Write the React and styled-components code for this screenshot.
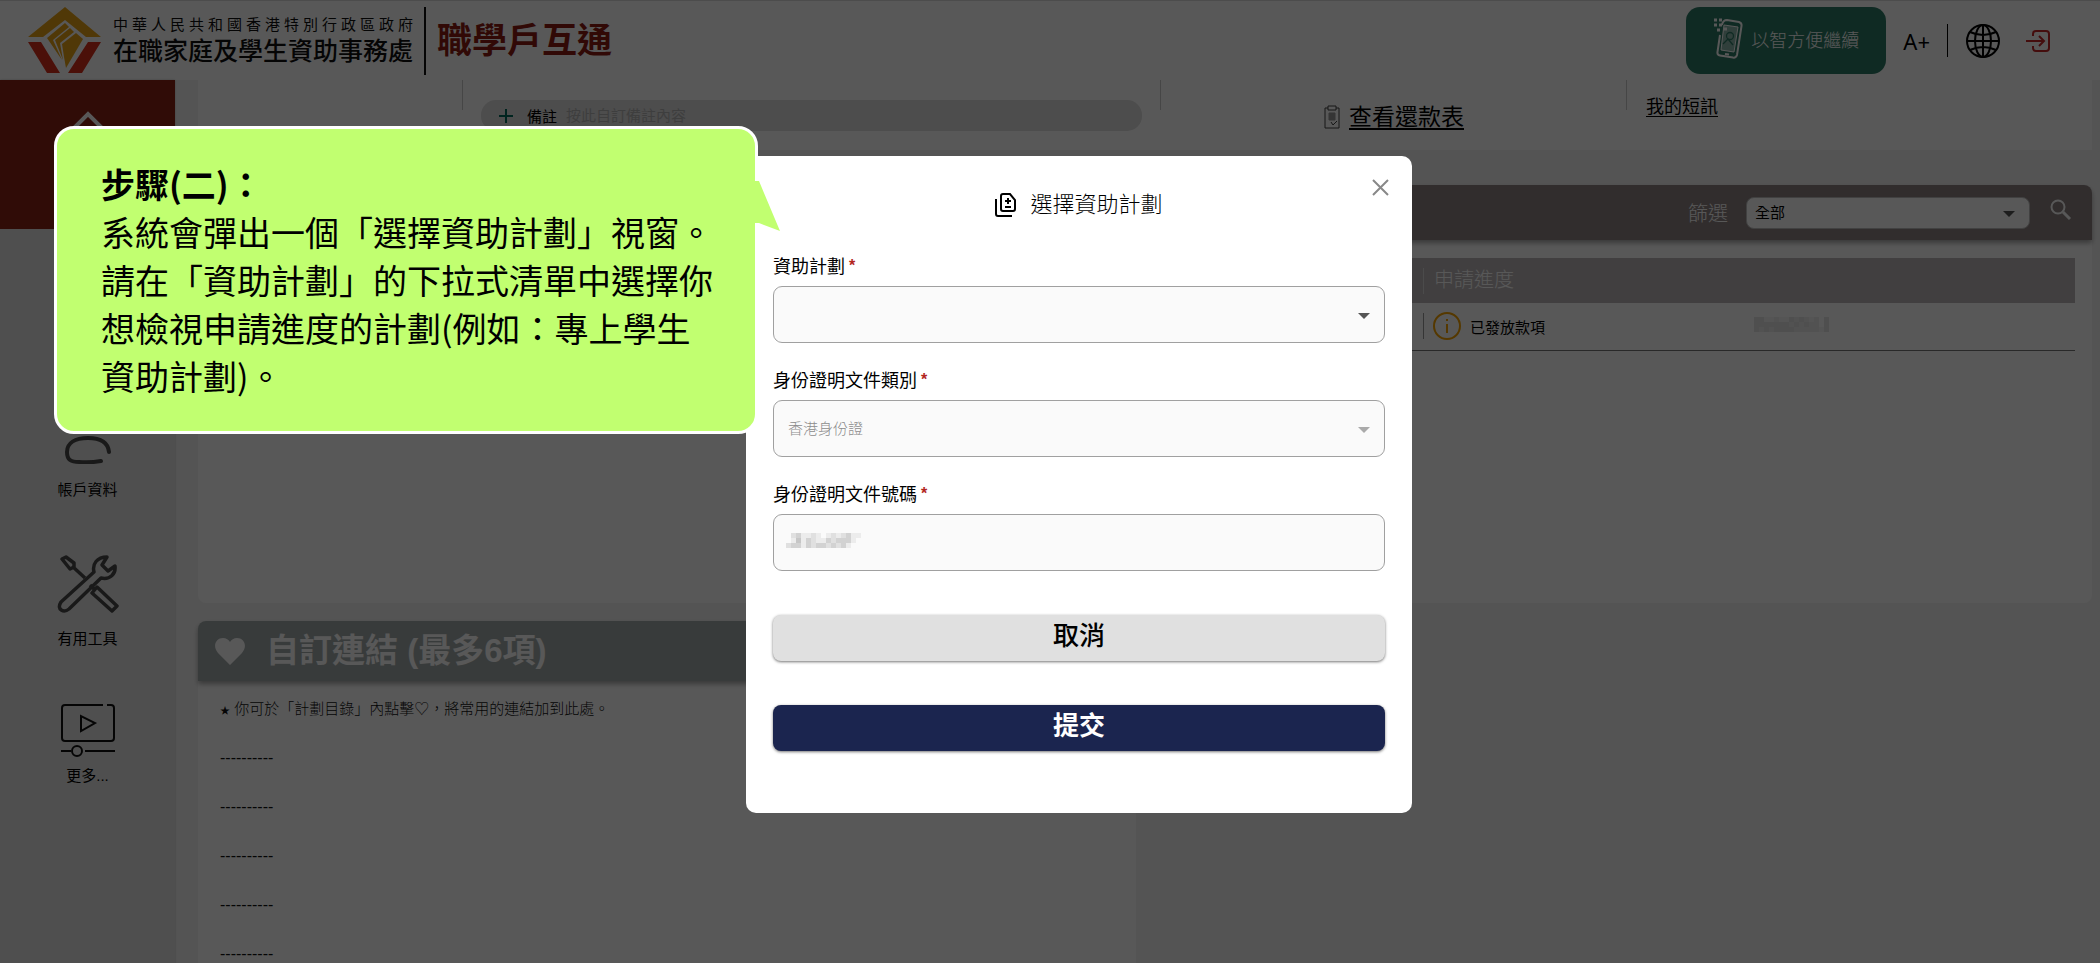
import React from "react";
import styled, { createGlobalStyle } from "styled-components";

const Global = createGlobalStyle`
  *, *::before, *::after { box-sizing: border-box; }
  body {
    margin: 0;
    background: #f4f4f4;
    color: #000;
    font-family: "Liberation Sans", "Noto Sans CJK TC", sans-serif;
    font-size: 16px;
    font-weight: 400;
  }
  button, input, select { font: inherit; color: inherit; }
  a { color: inherit; }
  h1, h2, p, ul { margin: 0; padding: 0; font-weight: inherit; }
  ul { list-style: none; }
`;

const Page = styled.div`
  height: 100vh;
  overflow: hidden;
`;

const Header = styled.header`
  display: flex;
  align-items: center;
  height: 80px;
  padding: 0 50px 0 28px;
  background: #fff;
  border-top: 1px solid #dcdcdc;
`;

const Department = styled.div`
  margin-left: 12px;
  color: #111;
`;

const Government = styled.p`
  font-size: 15px;
  line-height: 20px;
  text-align-last: justify;
`;

const Agency = styled.p`
  font-size: 25px;
  line-height: 32px;
  font-weight: 500;
`;

const SiteName = styled.h1`
  margin-left: 11px;
  padding-left: 11px;
  border-left: 2px solid #111;
  color: #8d1c12;
  font-size: 35px;
  line-height: 68px;
  font-weight: 700;
`;

const HeaderTools = styled.div`
  display: flex;
  align-items: center;
  margin-left: auto;
`;

const SmartButton = styled.button`
  display: flex;
  align-items: center;
  justify-content: center;
  gap: 8px;
  width: 200px;
  height: 67px;
  margin-right: 17px;
  padding: 0 8px 3px;
  border: 0;
  border-radius: 14px;
  background: #2e7b66;
  color: #fff;
  font-size: 18px;
  font-weight: 300;
`;

const PlainButton = styled.button`
  display: flex;
  align-items: center;
  padding: 0;
  border: 0;
  background: none;
  font-family: "Noto Sans", sans-serif;
  font-size: 22px;
`;

const ToolRule = styled.span`
  width: 1px;
  height: 33px;
  margin: 0 18px 0 17px;
  background: #000;
`;

const LogoutLink = styled.a`
  display: flex;
  margin-left: 26px;
`;

const Body = styled.div`
  display: flex;
  align-items: stretch;
  min-height: calc(100vh - 80px);
`;

const Sidebar = styled.nav`
  flex: none;
  width: 175px;
  background: #e6e6e6;
  box-shadow: 0 0 2px #bbb;
`;

const HomeLink = styled.a`
  display: flex;
  justify-content: center;
  height: 149px;
  padding-top: 30px;
  background: #8b2317;
`;

const SideList = styled.ul`
  display: flex;
  flex-direction: column;
  gap: 53px;
  padding-top: 173px;
`;

const SideLink = styled.a`
  display: flex;
  flex-direction: column;
  align-items: center;
  gap: ${(p) => (p.$tight ? 6 : 14)}px;
  font-size: 15px;
  line-height: 24px;
  text-decoration: none;
`;

const Main = styled.main`
  flex: 1;
  min-width: 0;
  padding: 0 8px 0 23px;
`;

const InfoBar = styled.section`
  display: grid;
  grid-template-columns: 265px 698px 466px 1fr;
  height: 70px;
  background: #fff;
`;

const InfoCell = styled.div`
  display: flex;
  align-items: flex-start;
  justify-content: ${(p) => (p.$center ? "center" : "flex-start")};
  padding: ${(p) => p.$pad || "0"};
  background: linear-gradient(#ccc, #ccc) right top / 1px 30px no-repeat;
  &:last-child { background: none; }
`;

const NoteBox = styled.label`
  display: flex;
  align-items: center;
  gap: 9px;
  flex: 1;
  height: 31px;
  padding: 0 18px;
  border-radius: 15px;
  background: #dedede;
  font-size: 15px;
  svg { margin-right: 5px; }
`;

const NoteInput = styled.input`
  flex: 1;
  min-width: 0;
  padding: 0;
  border: 0;
  background: none;
  &::placeholder { color: #b4b4b4; opacity: 1; }
`;

const InfoLink = styled.a`
  display: flex;
  align-items: center;
  gap: 9px;
  font-size: ${(p) => (p.$large ? 23 : 18)}px;
  line-height: 30px;
  text-underline-offset: 3px;
`;

const Card = styled.section`
  background: #fff;
  border-radius: 8px;
  margin-top: ${(p) => p.$gap}px;
  min-height: ${(p) => p.$min}px;
  width: ${(p) => p.$width || "100%"};
`;

const CardBar = styled.div`
  display: flex;
  align-items: center;
  height: ${(p) => (p.$links ? 60 : 55)}px;
  padding: ${(p) => (p.$links ? "0 17px" : "0 20px")};
  justify-content: ${(p) => (p.$links ? "flex-start" : "flex-end")};
  border-radius: 8px 8px 0 0;
  background: ${(p) => (p.$links ? "#a2abab" : "#8e8484")};
  box-shadow: 0 3px 5px rgba(0, 0, 0, 0.35);
  color: #fff;
`;

const LinksTitle = styled.h2`
  margin-left: 21px;
  font-size: 33px;
  line-height: 48px;
  font-weight: 700;
`;

const FilterLabel = styled.label`
  display: flex;
  align-items: center;
  gap: 18px;
  font-size: 20px;
  font-weight: 300;
`;

const SelectWrap = styled.span`
  display: flex;
  position: relative;
  width: ${(p) => p.$width || "100%"};
  svg {
    position: absolute;
    right: 15px;
    top: 50%;
    margin-top: -2px;
    pointer-events: none;
  }
`;

const FilterSelect = styled.select`
  width: 100%;
  height: 32px;
  padding: 0 8px;
  appearance: none;
  border: 1px solid #bbb;
  border-radius: 8px;
  background: #fff;
  color: #000;
  font-size: 15px;
  font-weight: 400;
`;

const IconButton = styled.button`
  display: flex;
  margin: 0 0 6px 20px;
  padding: 0;
  border: 0;
  background: none;
`;

const TableWrap = styled.div`
  padding: 18px 17px 0;
`;

const StatusTable = styled.table`
  width: 100%;
  table-layout: fixed;
  border-collapse: collapse;
  text-align: left;
`;

const Col = styled.col`
  width: ${(p) => p.$width};
`;

const Th = styled.th`
  height: 45px;
  padding: 0 0 4px 11px;
  background: ${(p) => (p.$rule ? "linear-gradient(#d8d8d8, #d8d8d8) left center / 1px 26px no-repeat, #bdb8ba" : "#bdb8ba")};
  color: #fff;
  font-size: 20px;
  font-weight: 300;
`;

const Td = styled.td`
  height: 47px;
  padding: 0 0 0 10px;
  border-bottom: 1px solid #777;
  background: ${(p) => (p.$rule ? "linear-gradient(#999, #999) left center / 1px 26px no-repeat" : "none")};
`;

const Status = styled.span`
  display: flex;
  align-items: center;
  gap: 9px;
  font-size: 15px;
`;

const LinksNote = styled.p`
  padding: 18px 22px 0;
  color: #111;
  font-size: 15px;
  line-height: 20px;
  font-weight: 300;
  small { font-size: 10px; }
`;

const EmptyLinks = styled.ul`
  padding: 12px 22px 0;
  font-size: 16px;
  line-height: 49px;
  color: #111;
`;

const Overlay = styled.div`
  position: fixed;
  inset: 0;
  display: flex;
  justify-content: center;
  align-items: flex-start;
  padding: 156px 0 0 58px;
  background: rgba(0, 0, 0, 0.655);
`;

const Dialog = styled.form`
  position: relative;
  display: flex;
  flex-direction: column;
  width: 666px;
  padding: 33px 27px 62px;
  border-radius: 10px;
  background: #fff;
`;

const CloseButton = styled.button`
  position: absolute;
  top: 23px;
  right: 23px;
  display: flex;
  padding: 0;
  border: 0;
  background: none;
`;

const DialogTitle = styled.h2`
  display: flex;
  align-items: center;
  justify-content: center;
  gap: 14px;
  margin-bottom: 36px;
  font-size: 22px;
  line-height: 32px;
  font-weight: 300;
`;

const Field = styled.div`
  margin-bottom: 28px;
`;

const FieldLabel = styled.label`
  display: flex;
  gap: 4px;
  margin-bottom: 9px;
  font-size: 18px;
  line-height: 20px;
  span { color: #b3261e; font-size: 16px; line-height: 18px; font-weight: 700; }
`;

const fieldBox = `
  width: 100%;
  height: 57px;
  padding: 0 14px;
  appearance: none;
  border: 1px solid #a0a0a0;
  border-radius: 9px;
  background: #fafafa;
  color: #8c8c8c;
  opacity: 1;
  font-size: 15px;
  font-weight: 300;
`;
const FieldSelect = styled.select`${fieldBox}`;
const FieldInput = styled.input`${fieldBox}`;

const MaskedField = styled.div`
  display: grid;
  align-items: center;
  > * { grid-area: 1 / 1; }
  svg { margin: 0 0 4px 13px; pointer-events: none; }
`;

const DialogButton = styled.button`
  height: 46px;
  margin-top: ${(p) => (p.$primary ? 44 : 16)}px;
  padding: 0 0 4px;
  border: 0;
  border-radius: 8px;
  background: ${(p) => (p.$primary ? "#1b254f" : "#e0e0e0")};
  color: ${(p) => (p.$primary ? "#fff" : "#000")};
  box-shadow: 0 1px 3px rgba(0, 0, 0, 0.55);
  font-size: 26px;
  line-height: 40px;
  font-weight: ${(p) => (p.$primary ? 700 : 500)};
`;

const Callout = styled.aside`
  position: fixed;
  left: 54px;
  top: 126px;
  width: 704px;
  padding: 31px 40px 31px 44px;
  border: 3px solid #fff;
  border-radius: 20px;
  background: #c1ff70;
  font-family: "Noto Sans CJK TC", sans-serif;
  font-size: 34px;
  line-height: 48px;
  strong { font-weight: 700; }
`;

const Tail = styled.svg`
  position: absolute;
  left: 698px;
  top: 52px;
`;

function Mosaic({ cells, cols, size, tone }) {
  return (
    <svg width={cols * size} height={Math.ceil(cells.length / cols) * size} aria-hidden="true">
      {cells.map((v, i) => (
        <rect key={i} x={(i % cols) * size} y={Math.floor(i / cols) * size} width={size} height={size} fill={tone} fillOpacity={v / 10} />
      ))}
    </svg>
  );
}

const idCells = [0,2,3,1,1,2,1,0,1,2,1,2,3,1,1, 0,1,4,1,3,2,1,1,3,2,3,3,3,1,0, 2,3,3,1,3,2,3,3,2,3,2,3,1,0,0];
const refCells = [3,3,1,1,2,1,1,3,2,3,2,1,2,0,3, 3,3,3,3,3,3,3,2,3,2,3,2,2,0,3, 3,2,3,2,3,3,3,3,2,2,2,2,2,1,3];

const Arrow = ({ color = "#555" }) => (
  <svg width="12" height="6" viewBox="0 0 12 6" aria-hidden="true"><path d="M0 0h12L6 6z" fill={color} /></svg>
);

const Logo = () => (
  <svg width="73" height="67" viewBox="0 0 73 67" aria-hidden="true">
    <path d="M37 0 73 30H58L37 13 15 30H0z" fill="#e8a317" />
    <path d="M0 35h13l19 31H19zM73 35H60L40 66h14z" fill="#d9301c" />
    <path d="M19 31 37 16 41 20 25 33 34 53z" fill="#e8a317" />
    <path d="M27 33 42 21 46 25 32 36 35 53z" fill="#e8a317" />
    <path d="M34 37 48 26 55 32 38 61 36 50z" fill="#e8a317" />
  </svg>
);

const Phone = () => (
  <svg width="30" height="42" viewBox="0 0 30 42" fill="none" stroke="#fff" strokeWidth="2" aria-hidden="true">
    <path d="M9 7q1-5 5-5l12 2q3 1 2.500 4L24 37q-1 3-4 2.600L7 37.500Q4 37 4.500 34L7 17" />
    <path d="M11 7 25 9 21 34 8 32 10 15z" strokeWidth="1" fill="#fff" fillOpacity=".45" />
    <circle cx="17" cy="18" r="3.500" strokeWidth="1.300" stroke="#2e7b66" />
    <path d="m10 26 5-5 5 6" strokeWidth="1.300" stroke="#2e7b66" />
    <path d="M12 36l4 .6" />
    <path d="M1 2h3M6 2h3M1 7h3M6 7h3M4 12h3M11 11h3" strokeWidth="3" />
  </svg>
);

const Globe = () => (
  <svg width="34" height="34" viewBox="0 0 34 34" fill="none" stroke="#000" strokeWidth="2" aria-hidden="true">
    <circle cx="17" cy="17" r="16" />
    <ellipse cx="17" cy="17" rx="8" ry="16" />
    <path d="M17 1v32M1 17h32M4 8q13 6 26 0M4 26q13-6 26 0" />
  </svg>
);

const Exit = () => (
  <svg width="24" height="22" viewBox="0 0 24 22" fill="none" stroke="#c62828" strokeWidth="2" aria-hidden="true">
    <path d="M7 6V4q0-3 3-3h10q3 0 3 3v14q0 3-3 3H10q-3 0-3-3v-2M0 11h17M13 6l5 5-5 5" />
  </svg>
);

const HomeIcon = () => (
  <svg width="60" height="56" viewBox="0 0 60 56" fill="none" stroke="#fff" strokeWidth="4" aria-hidden="true">
    <path d="M3 31 30 4l27 27M12 24v29h36V24" />
  </svg>
);

const Person = () => (
  <svg width="46" height="62" viewBox="0 0 46 62" fill="none" stroke="#4a4a4a" strokeWidth="4" strokeLinecap="round" aria-hidden="true">
    <circle cx="23" cy="14" r="12" />
    <path d="M44 50C43 40 36 36 23 36S2 41 2 50C2 58 6 60 14 60Q25 61 36 59" />
  </svg>
);

const Tools = () => (
  <svg width="62" height="58" viewBox="0 0 62 58" fill="none" stroke="#4a4a4a" strokeWidth="3.500" strokeLinejoin="round" aria-hidden="true">
    <path d="M37 17C35 9 40 2 50 2L45 10 51 16 58 11C59 19 53 25 44 23L12 54C7 58-1 55 4 47z" />
    <path d="M5 4 9 2 17 8 17 12 13 14zM15 11 28 23M33 30 37 34M35 38 40 32 60 51 55 56z" />
  </svg>
);

const Video = () => (
  <svg width="54" height="54" viewBox="0 0 54 54" fill="none" stroke="#111" strokeWidth="2" aria-hidden="true">
    <path d="M42 1H4Q1 1 1 4v30q0 3 3 3h46q3 0 3-3V4q0-3-3-3h-4M20 12v15l14-8zM0 47h10M24 47h30" />
    <circle cx="16" cy="47" r="5" />
  </svg>
);

const Clipboard = () => (
  <svg width="16" height="24" viewBox="0 0 16 24" fill="none" stroke="#444" aria-hidden="true">
    <path d="M4 3H1v20h14V3h-3M4 1h8v4H4zM7 17l2 3 4-4" />
    <path d="M5 8h6v7H5z" fill="#999" stroke="#999" />
  </svg>
);

const Copies = () => (
  <svg width="21" height="24" viewBox="0 0 21 24" fill="none" stroke="#000" strokeWidth="2" aria-hidden="true">
    <path d="M1 6v15q0 2 2 2h14M8 1h7l5 6v9q0 2-2 2H8q-2 0-2-2V3q0-2 2-2zM10 8h6M13 5v6M10 14h6" />
  </svg>
);

export default function App() {
  return (
    <>
      <Global />
      <Page>
        <Header>
          <Logo />
          <Department>
            <Government>中華人民共和國香港特別行政區政府</Government>
            <Agency>在職家庭及學生資助事務處</Agency>
          </Department>
          <SiteName>職學戶互通</SiteName>
          <HeaderTools>
            <SmartButton type="button"><Phone />以智方便繼續</SmartButton>
            <PlainButton type="button">A+</PlainButton>
            <ToolRule />
            <PlainButton type="button" aria-label="語言"><Globe /></PlainButton>
            <LogoutLink href="#logout" aria-label="登出"><Exit /></LogoutLink>
          </HeaderTools>
        </Header>
        <Body>
          <Sidebar>
            <HomeLink href="#home" aria-label="主頁"><HomeIcon /></HomeLink>
            <SideList>
              <li><SideLink href="#account"><Person />帳戶資料</SideLink></li>
              <li><SideLink href="#tools"><Tools />有用工具</SideLink></li>
              <li><SideLink $tight href="#more"><Video />更多...</SideLink></li>
            </SideList>
          </Sidebar>
          <Main>
            <InfoBar>
              <InfoCell />
              <InfoCell $pad="20px 19px 0 18px">
                <NoteBox>
                  <svg width="14" height="14" viewBox="0 0 14 14" aria-hidden="true"><path d="M7 0v14M0 7h14" stroke="#00695c" strokeWidth="2" /></svg>
                  備註
                  <NoteInput placeholder="按此自訂備註內容" />
                </NoteBox>
              </InfoCell>
              <InfoCell $center $pad="22px 0 0">
                <InfoLink $large href="#repay"><Clipboard /><u>查看還款表</u></InfoLink>
              </InfoCell>
              <InfoCell $pad="12px 0 0 19px">
                <InfoLink href="#messages"><u>我的短訊</u></InfoLink>
              </InfoCell>
            </InfoBar>
            <Card $gap={35} $min={418}>
              <CardBar>
                <FilterLabel>
                  篩選
                  <SelectWrap $width="284px">
                    <FilterSelect><option>全部</option></FilterSelect>
                    <Arrow />
                  </SelectWrap>
                </FilterLabel>
                <IconButton type="button" aria-label="搜尋">
                  <svg width="22" height="22" viewBox="0 0 22 22" fill="none" stroke="#fff" strokeWidth="2" aria-hidden="true"><circle cx="8" cy="8" r="6.500" /><path d="m13 13 7 7" strokeWidth="3" /></svg>
                </IconButton>
              </CardBar>
              <TableWrap>
                <StatusTable>
                  <colgroup><col /><Col $width="321px" /><Col $width="331px" /></colgroup>
                  <thead><tr><Th /><Th $rule>申請進度</Th><Th /></tr></thead>
                  <tbody>
                    <tr>
                      <Td />
                      <Td $rule>
                        <Status>
                          <svg width="28" height="28" viewBox="0 0 28 28" fill="none" stroke="#f5a300" strokeWidth="2" aria-hidden="true"><circle cx="14" cy="14" r="13" /><path d="M14 12v9M14 7v2" /></svg>
                          已發放款項
                        </Status>
                      </Td>
                      <Td><Mosaic cells={refCells} cols={15} size={5} tone="#aaa" /></Td>
                    </tr>
                  </tbody>
                </StatusTable>
              </TableWrap>
            </Card>
            <Card $gap={18} $min={400} $width="calc(50% - 9px)">
              <CardBar $links>
                <svg width="30" height="27" viewBox="0 0 30 27" aria-hidden="true"><path d="M15 27 3 15C-3 8 1 0 8 0c3 0 6 2 7 4 1-2 4-4 7-4 7 0 11 8 5 15z" fill="#fff" /></svg>
                <LinksTitle>自訂連結 (最多6項)</LinksTitle>
              </CardBar>
              <LinksNote><small>★</small> 你可於「計劃目錄」內點擊♡，將常用的連結加到此處。</LinksNote>
              <EmptyLinks>
                {[1, 2, 3, 4, 5].map((n) => <li key={n}>----------</li>)}
              </EmptyLinks>
            </Card>
          </Main>
        </Body>
      </Page>
      <Overlay>
        <Dialog role="dialog" aria-labelledby="dialog-title" onSubmit={(e) => e.preventDefault()}>
          <CloseButton type="button" aria-label="關閉">
            <svg width="17" height="17" viewBox="0 0 17 17" aria-hidden="true"><path d="m1 1 15 15M16 1 1 16" stroke="#888" strokeWidth="2" /></svg>
          </CloseButton>
          <DialogTitle id="dialog-title"><Copies />選擇資助計劃</DialogTitle>
          <Field>
            <FieldLabel htmlFor="scheme">資助計劃<span>*</span></FieldLabel>
            <SelectWrap><FieldSelect id="scheme"><option> </option></FieldSelect><Arrow /></SelectWrap>
          </Field>
          <Field>
            <FieldLabel htmlFor="idtype">身份證明文件類別<span>*</span></FieldLabel>
            <SelectWrap><FieldSelect id="idtype" disabled><option>香港身份證</option></FieldSelect><Arrow color="#aaa" /></SelectWrap>
          </Field>
          <Field>
            <FieldLabel htmlFor="idno">身份證明文件號碼<span>*</span></FieldLabel>
            <MaskedField><FieldInput id="idno" /><Mosaic cells={idCells} cols={15} size={5} tone="#777" /></MaskedField>
          </Field>
          <DialogButton type="button">取消</DialogButton>
          <DialogButton $primary type="submit">提交</DialogButton>
        </Dialog>
      </Overlay>
      <Callout>
        <strong>步驟(二)：</strong>
        <p>系統會彈出一個「選擇資助計劃」視窗。</p>
        <p>請在「資助計劃」的下拉式清單中選擇你想檢視申請進度的計劃(例如：專上學生資助計劃)。</p>
        <Tail width="30" height="60" viewBox="0 0 30 60" aria-hidden="true"><path d="M0 0H4L25 50 4 42H0z" fill="#c1ff70" /></Tail>
      </Callout>
    </>
  );
}
